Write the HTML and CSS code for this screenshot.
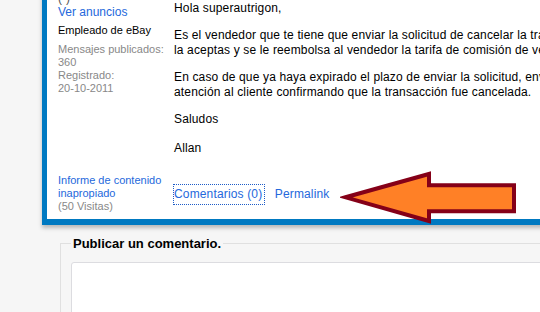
FILE: index.html
```html
<!DOCTYPE html>
<html>
	<head>
		<meta charset="UTF-8">
		<title>Comentario</title>
		<link rel="stylesheet" href="styles.css">
	</head>
	<body>
		<div class="post">
			<div class="author">
				<div class="stars">(-)</div>
				<a class="ads" href="#">Ver anuncios</a>
				<div class="role">Empleado de eBay</div>
				<div class="meta">Mensajes publicados:<br>360<br>Registrado:<br>20-10-2011</div>
			</div>
			<div class="message">
				<p>Hola superautrigon,</p>
				<p>Es el vendedor que te tiene que enviar la solicitud de cancelar la transacción, tú solo tienes que confirmar que<br>la aceptas y se le reembolsa al vendedor la tarifa de comisión de venta final.</p>
				<p>En caso de que ya haya expirado el plazo de enviar la solicitud, envía un mensaje a nuestro equipo de<br>atención al cliente confirmando que la transacción fue cancelada.</p>
				<p>Saludos</p>
				<p class="sign">Allan</p>
			</div>
			<div class="report">
				<a href="#">Informe de contenido<br>inapropiado</a><br>
				<span class="views">(50 Visitas)</span>
			</div>
			<div class="links">
				<a class="comments" href="#">Comentarios (0)</a>
				<a class="permalink" href="#">Permalink</a>
			</div>

			<!-- flecha -->
			<svg class="arrow" width="180" height="60" viewBox="0 0 180 60">
				<polygon points="5.5,29.3 89,6 89,17.3 174,17.3 174,43.3 89,43.3 89,53" fill="#ff8026" stroke="#850018" stroke-width="4" stroke-linejoin="miter"/>
			</svg>
		</div>

		<fieldset class="reply">
			<legend>Publicar un comentario.</legend>
			<div class="textbox"></div>
		</fieldset>
	</body>
</html>
```
FILE: styles.css
```css
* {
	margin: 0;
	padding: 0;
}
html, body {
	overflow: hidden;
}
body {
	background: #f6f6f6;
	font-family: "Liberation Sans", Arial, sans-serif;
	color: #000;
	width: 540px;
	height: 312px;
}
a {
	color: #2468dc;
	text-decoration: none;
}

.post {
	position: relative;
	margin: -30px 0 0 42px;
	width: 600px;
	background: #fff;
	border: 5px solid #0079c1;
	border-bottom-width: 6px;
	box-shadow: 0 3px 4px rgba(0, 0, 0, 0.25);
	display: grid;
	grid-template-columns: 116px 1fr;
	row-gap: 18px;
	padding: 16px 0 6px 11px;
}

.author {
	font-size: 11px;
	line-height: 13px;
}
.stars, .ads {
	display: block;
	font-size: 12px;
	line-height: 14px;
}
.stars {
	color: #555;
}
.role {
	margin-top: 5px;
}
.meta {
	margin-top: 6px;
	color: #888;
}

.message {
	padding-top: 10px;
	font-size: 12px;
	line-height: 15px;
	letter-spacing: 0.15px;
}
.message p {
	margin-bottom: 12px;
	white-space: nowrap;
}
.message .sign {
	margin: 14px 0 0;
}

.report {
	font-size: 11px;
	line-height: 13px;
	align-self: end;
}
.views {
	color: #888;
}

.links {
	align-self: end;
	margin-bottom: 8px;
	font-size: 12px;
	line-height: 13px;
	letter-spacing: 0.15px;
}
.comments {
	display: inline-block;
	margin-left: -1px;
	padding: 3px 2px 3px 0;
	border: 1px dotted #1d5cc8;
}
.permalink {
	margin-left: 6px;
}

.arrow {
	position: absolute;
	left: 293px;
	top: 193px;
}

.reply {
	margin: 11px 0 0 60px;
	width: 600px;
	height: 120px;
	border: 1px solid #e0e0e0;
	border-right: none;
	padding: 0 10px;
}
.reply legend {
	padding: 0 2px;
	font-size: 13px;
	font-weight: bold;
	line-height: 15px;
}
.textbox {
	margin-top: 11px;
	height: 100px;
	background: #fff;
	border: 1px solid #dcdce0;
	border-radius: 3px;
}
```
